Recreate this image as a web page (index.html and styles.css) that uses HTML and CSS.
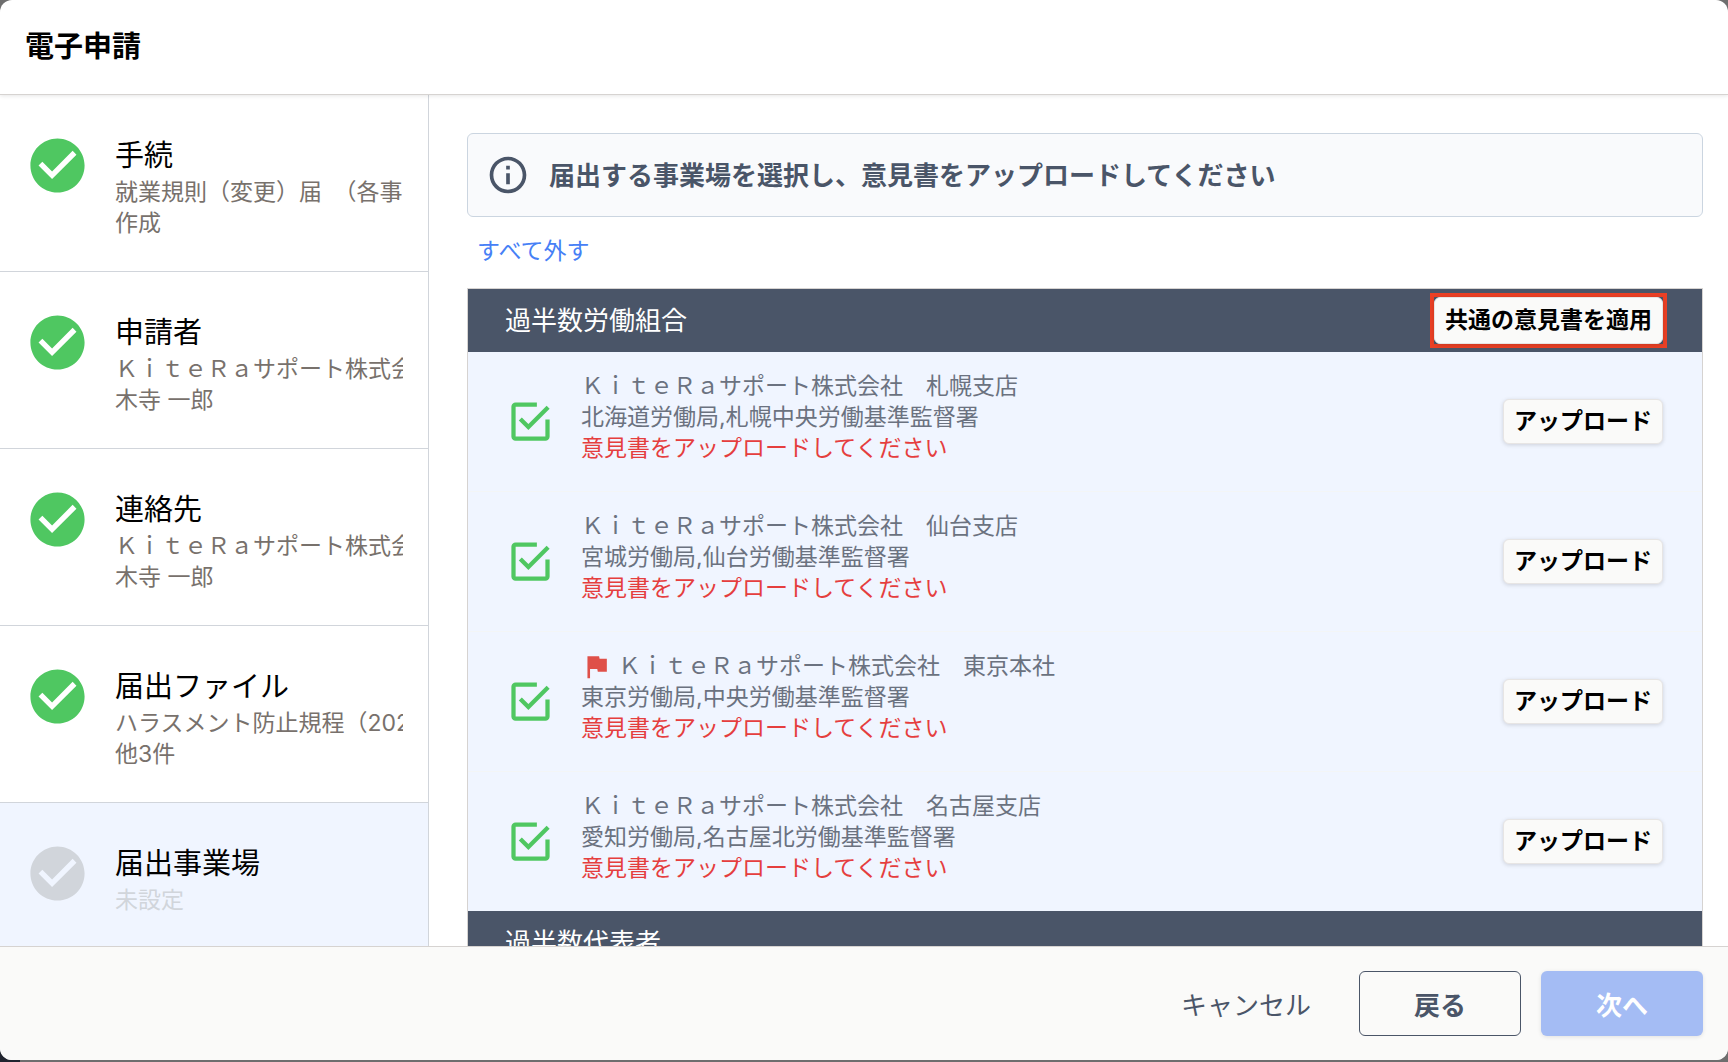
FILE: index.html
```html
<!DOCTYPE html>
<html lang="ja">
<head>
  <meta charset="UTF-8">
  <meta name="viewport" content="width=device-width, initial-scale=1">
  <title>電子申請</title>
  <link rel="stylesheet" href="styles.css">
</head>
<body>
  <!-- アイコン定義 -->
  <svg class="icon-defs" width="0" height="0" aria-hidden="true">
    <symbol id="icon-done" viewBox="0 0 24 24">
      <path d="M12 2C6.48 2 2 6.48 2 12s4.48 10 10 10 10-4.48 10-10S17.52 2 12 2zm-2 15-5-5 1.41-1.41L10 14.17l7.59-7.59L19 8l-9 9z"/>
    </symbol>
    <symbol id="icon-info" viewBox="0 0 24 24">
      <path d="M11 7h2v2h-2zm0 4h2v6h-2zm1-9C6.48 2 2 6.48 2 12s4.48 10 10 10 10-4.48 10-10S17.52 2 12 2zm0 18c-4.41 0-8-3.59-8-8s3.59-8 8-8 8 3.59 8 8-3.59 8-8 8z"/>
    </symbol>
    <symbol id="icon-checkbox" viewBox="0 0 24 24">
      <path d="M19 11v8H5V5h10V3H5c-1.1 0-2 .9-2 2v14c0 1.1.9 2 2 2h14c1.1 0 2-.9 2-2v-8h-2zM7.91 10.08 6.5 11.5 11 16 21 6l-1.41-1.42L11 13.17z"/>
    </symbol>
    <symbol id="icon-flag" viewBox="0 0 24 24">
      <path d="M14.4 6 14 4H5v17h2v-7h5.6l.4 2h7V6z"/>
    </symbol>
  </svg>

  <div class="modal" role="dialog" aria-labelledby="modalTitle">
    <header class="modal-header">
      <h1 id="modalTitle">電子申請</h1>
    </header>

    <div class="modal-body">
      <nav class="steps">
        <a class="step" href="#procedure">
          <svg class="step-icon"><use href="#icon-done"/></svg>
          <div class="step-text">
            <h2>手続</h2>
            <p>就業規則（変更）届　（各事業場）</p>
            <p>作成</p>
          </div>
        </a>
        <a class="step" href="#applicant">
          <svg class="step-icon"><use href="#icon-done"/></svg>
          <div class="step-text">
            <h2>申請者</h2>
            <p>ＫｉｔｅＲａサポート株式会社</p>
            <p>木寺 一郎</p>
          </div>
        </a>
        <a class="step" href="#contact">
          <svg class="step-icon"><use href="#icon-done"/></svg>
          <div class="step-text">
            <h2>連絡先</h2>
            <p>ＫｉｔｅＲａサポート株式会社</p>
            <p>木寺 一郎</p>
          </div>
        </a>
        <a class="step" href="#files">
          <svg class="step-icon"><use href="#icon-done"/></svg>
          <div class="step-text">
            <h2>届出ファイル</h2>
            <p>ハラスメント防止規程（2022）</p>
            <p>他3件</p>
          </div>
        </a>
        <a class="step active" href="#offices">
          <svg class="step-icon"><use href="#icon-done"/></svg>
          <div class="step-text">
            <h2>届出事業場</h2>
            <p>未設定</p>
          </div>
        </a>
      </nav>

      <main class="content">
        <div class="notice">
          <svg class="notice-icon"><use href="#icon-info"/></svg>
          <p>届出する事業場を選択し、意見書をアップロードしてください</p>
        </div>

        <button type="button" class="link-button">すべて外す</button>

        <div class="offices">
          <section>
            <div class="group-header">
              <h3>過半数労働組合</h3>
              <div class="highlight">
                <button type="button" class="small-button">共通の意見書を適用</button>
              </div>
            </div>
            <ul class="office-list">
              <li class="office">
                <span class="check">
                  <input type="checkbox" id="sapporo" checked>
                  <svg><use href="#icon-checkbox"/></svg>
                </span>
                <label class="office-text" for="sapporo">
                  <span>ＫｉｔｅＲａサポート株式会社　札幌支店</span>
                  <span>北海道労働局,札幌中央労働基準監督署</span>
                  <span class="error">意見書をアップロードしてください</span>
                </label>
                <button type="button" class="small-button">アップロード</button>
              </li>
              <li class="office">
                <span class="check">
                  <input type="checkbox" id="sendai" checked>
                  <svg><use href="#icon-checkbox"/></svg>
                </span>
                <label class="office-text" for="sendai">
                  <span>ＫｉｔｅＲａサポート株式会社　仙台支店</span>
                  <span>宮城労働局,仙台労働基準監督署</span>
                  <span class="error">意見書をアップロードしてください</span>
                </label>
                <button type="button" class="small-button">アップロード</button>
              </li>
              <li class="office">
                <span class="check">
                  <input type="checkbox" id="tokyo" checked>
                  <svg><use href="#icon-checkbox"/></svg>
                </span>
                <label class="office-text" for="tokyo">
                  <span class="head-office"><svg class="flag"><use href="#icon-flag"/></svg>ＫｉｔｅＲａサポート株式会社　東京本社</span>
                  <span>東京労働局,中央労働基準監督署</span>
                  <span class="error">意見書をアップロードしてください</span>
                </label>
                <button type="button" class="small-button">アップロード</button>
              </li>
              <li class="office">
                <span class="check">
                  <input type="checkbox" id="nagoya" checked>
                  <svg><use href="#icon-checkbox"/></svg>
                </span>
                <label class="office-text" for="nagoya">
                  <span>ＫｉｔｅＲａサポート株式会社　名古屋支店</span>
                  <span>愛知労働局,名古屋北労働基準監督署</span>
                  <span class="error">意見書をアップロードしてください</span>
                </label>
                <button type="button" class="small-button">アップロード</button>
              </li>
            </ul>
          </section>
          <section>
            <div class="group-header">
              <h3>過半数代表者</h3>
            </div>
          </section>
        </div>
      </main>
    </div>

    <footer class="modal-footer">
      <button type="button" class="button cancel">キャンセル</button>
      <button type="button" class="button back">戻る</button>
      <button type="button" class="button next" disabled>次へ</button>
    </footer>
  </div>
</body>
</html>
```

FILE: styles.css
```css
* {
  box-sizing: border-box;
}

body {
  margin: 0;
  height: 100vh;
  overflow: hidden;
  background: linear-gradient(90deg, #20242f 20px, transparent 20px) left bottom / 100% 50% no-repeat #6e6e6e;
  color: #000;
  font-family: Inter, "Noto Sans CJK JP", sans-serif;
  font-size: 23px;
  line-height: 31px;
}

h1, h2, h3, p, ul {
  margin: 0;
  padding: 0;
}

button {
  font-family: inherit;
  cursor: pointer;
}

svg {
  display: block;
  flex-shrink: 0;
  fill: currentColor;
}

.icon-defs {
  position: absolute;
}

.modal {
  display: flex;
  flex-direction: column;
  height: calc(100vh - 2px);
  border-radius: 12px;
  overflow: hidden;
  background: #fff;
}

.modal-header {
  padding: 25px;
  border-bottom: 1px solid #d6d3d1;
  box-shadow: 0 1px 4px rgba(0, 0, 0, 0.1);
  z-index: 1;
}

.modal-header h1 {
  font-size: 29px;
  line-height: 44px;
}

.modal-body {
  display: flex;
  flex: 1;
  min-height: 0;
}

/* 左側のステップ */
.steps {
  width: 429px;
  flex-shrink: 0;
  overflow: hidden;
  border-right: 1px solid #d1d5db;
}

.step {
  display: flex;
  gap: 25px;
  padding: 38px 25px 32px;
  border-bottom: 1px solid #d1d5db;
  color: #78716c;
  text-decoration: none;
}

.step-icon {
  width: 65px;
  height: 65px;
  color: #4fc761;
}

.step-text {
  min-width: 0;
  padding-top: 2px;
  overflow: hidden;
  white-space: nowrap;
}

.step-text h2 {
  color: #000;
  font-size: 29px;
  font-weight: 400;
  line-height: 42px;
}

.step.active {
  height: 100%;
  background: #f0f5ff;
  color: #d1d5db;
}

.step.active .step-icon {
  color: #d1d5db;
}

/* 右側の内容 */
.content {
  flex: 1;
  min-width: 0;
  padding: 38px 25px 0 38px;
  overflow: hidden;
}

.notice {
  display: flex;
  align-items: center;
  gap: 19px;
  padding: 19px 18px;
  border: 1px solid #cbd5e0;
  border-radius: 6px;
  background: #f9fafc;
  color: #4a5568;
  font-size: 26px;
  font-weight: 700;
}

.notice-icon {
  width: 44px;
  height: 44px;
}

.link-button {
  display: block;
  margin: 19px 0 21px;
  padding: 0 10px;
  border: none;
  background: none;
  color: #4680f6;
  font-size: 23px;
  line-height: 31px;
}

.offices {
  border: 1px solid #d6d3d1;
}

.group-header {
  display: flex;
  align-items: center;
  justify-content: space-between;
  height: 63px;
  padding: 0 35px 0 37px;
  background: #4a5568;
  color: #fff;
}

.group-header h3 {
  font-size: 26px;
  font-weight: 400;
}

.highlight {
  border: 4px solid #ea4025;
}

.small-button {
  display: block;
  padding: 6px 10px;
  border: 1px solid #e7e5e4;
  border-radius: 6px;
  background: #fafaf9;
  box-shadow: 0 1px 4px rgba(0, 0, 0, 0.15);
  color: #000;
  font-size: 23px;
  font-weight: 700;
  line-height: 31px;
}

.highlight .small-button {
  padding: 7px 10px;
}

.office-list {
  list-style: none;
}

.office {
  display: flex;
  align-items: center;
  padding: 0 39px 0 37px;
  border-bottom: 1px solid #f3f5f6;
  background: #f0f5ff;
  color: #6b7280;
}

.office:last-child {
  border-bottom: none;
}

.check {
  position: relative;
  color: #4fc761;
}

.check svg {
  width: 51px;
  height: 51px;
}

.check input {
  position: absolute;
  inset: 0;
  width: 100%;
  height: 100%;
  margin: 0;
  opacity: 0;
}

.office-text {
  flex: 1;
  padding: 19px 0 27px 25px;
}

.office-text span {
  display: block;
}

.office-text .head-office {
  display: flex;
  align-items: center;
  gap: 6px;
}

.flag {
  width: 31px;
  height: 31px;
  color: #df5049;
}

.office-text .error {
  color: #e53e3e;
}

/* フッター */
.modal-footer {
  display: flex;
  justify-content: flex-end;
  gap: 20px;
  padding: 24px 25px;
  border-top: 1px solid #d6d3d1;
  background: #fafaf9;
}

.button {
  min-width: 162px;
  height: 65px;
  padding: 0 27px;
  border: 1px solid transparent;
  border-radius: 6px;
  background: none;
  color: #4a5568;
  font-size: 26px;
  font-weight: 700;
}

.cancel {
  font-weight: 400;
}

.back {
  border-color: #4a5568;
}

.next {
  background: #a4bcf4;
  box-shadow: 0 1px 4px rgba(0, 0, 0, 0.1);
  color: #fff;
}
```
